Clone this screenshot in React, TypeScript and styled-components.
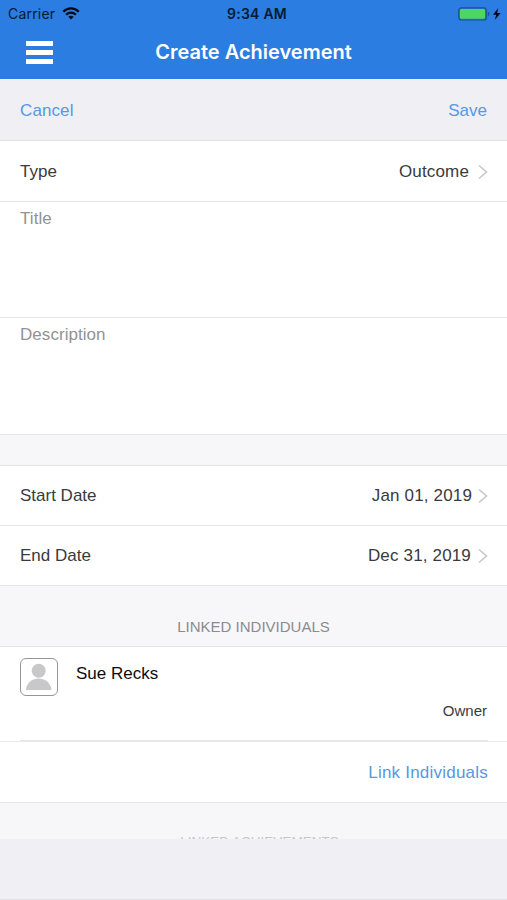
import React from "react";
import styled, { createGlobalStyle } from "styled-components";

const GlobalStyle = createGlobalStyle`
  *, *::before, *::after { box-sizing: border-box; }
  body { margin: 0; background: #efeff4; }
  button { border: 0; padding: 0; margin: 0; background: none; font: inherit; }
  svg { display: block; }
`;

const Screen = styled.div`
  width: 507px;
  height: 900px;
  display: flex;
  flex-direction: column;
  overflow: hidden;
  background: #ffffff;
  color: #3a3a3c;
  font: 17px/20px "Liberation Sans", Arial, sans-serif;
  white-space: nowrap;
`;

const Header = styled.header`
  flex: none;
  height: 79px;
  background: #2b7de1;
  font-family: Inter, sans-serif;
`;

const StatusBar = styled.div`
  height: 27px;
  display: grid;
  grid-template-columns: 1fr auto 1fr;
  align-items: center;
  padding: 0 6px 0 8px;
  color: #071a33;
  font-size: 14px;
`;

const Carrier = styled.div`
  display: flex;
  align-items: center;
  gap: 7px;
  letter-spacing: 0.2px;
`;

const Clock = styled.div`
  font-weight: 600;
  font-size: 14px;
  letter-spacing: 0.25px;
  padding-left: 5px;
`;

const Power = styled.div`
  display: flex;
  justify-content: flex-end;
`;

const NavBar = styled.div`
  height: 50px;
  display: grid;
  grid-template-columns: 1fr auto 1fr;
  align-items: center;
  padding: 0 26px;
`;

const MenuButton = styled.button`
  width: 27px;
  height: 23px;
  display: flex;
  flex-direction: column;
  justify-content: space-between;
`;

const MenuBar = styled.span`
  width: 27px;
  height: 5px;
  background: #ffffff;
`;

const NavTitle = styled.h1`
  margin: 0;
  color: #ffffff;
  font-size: 20px;
  line-height: 24px;
  font-weight: 600;
  letter-spacing: 0;
`;

const Actions = styled.div`
  flex: none;
  height: 62px;
  display: flex;
  align-items: center;
  justify-content: space-between;
  padding: 2px 20px 0 20px;
  background: #efeff4;
  border-bottom: 1px solid #e0e0e3;
`;

const LinkButton = styled.button<{ $spacing?: number }>`
  color: #5599e2;
  letter-spacing: ${(p) => p.$spacing ?? 0}px;
`;

const Row = styled.div<{ $height: number }>`
  flex: none;
  height: ${(p) => p.$height}px;
  display: flex;
  align-items: center;
  justify-content: space-between;
  padding: 1px 19px 0 20px;
  border-bottom: 1px solid #e5e5e8;
`;

const RowValue = styled.div<{ $gap: number }>`
  display: flex;
  align-items: center;
  gap: ${(p) => p.$gap}px;
  letter-spacing: 0.16px;
`;

const TextArea = styled.div<{ $height: number }>`
  flex: none;
  height: ${(p) => p.$height}px;
  padding: 7px 20px;
  color: #929294;
  letter-spacing: 0.05px;
  border-bottom: 1px solid #e5e5e8;
`;

const Band = styled.div<{ $height: number; $pad?: number }>`
  flex: none;
  height: ${(p) => p.$height}px;
  padding-top: ${(p) => p.$pad ?? 0}px;
  overflow: hidden;
  background: #f7f7fa;
  border-bottom: 1px solid #e4e4e8;
  color: #8b8b8e;
  font-size: 15px;
  line-height: 18px;
  text-align: center;
`;

const NextBand = styled(Band)`
  border-bottom: 0;
  padding-left: 12px;
  color: #c6c6c9;
  font-size: 13.5px;
`;

const Person = styled.div`
  flex: none;
  height: 95px;
  display: grid;
  grid-template-columns: 38px 1fr auto;
  column-gap: 18px;
  padding: 0 20px 0 20px;
  background: linear-gradient(#e5e5e7, #e5e5e7) 20px 93px / 468px 1px no-repeat;
  border-bottom: 1px solid #e9e9eb;
`;

const Avatar = styled.div`
  width: 38px;
  height: 38px;
  margin-top: 11px;
  border: 1.5px solid #969698;
  border-radius: 6px;
  overflow: hidden;
`;

const PersonName = styled.div`
  padding-top: 17px;
  color: #0c0c0d;
`;

const Role = styled.div`
  padding-top: 54px;
  font-size: 15px;
`;

const LinkRow = styled.div`
  flex: none;
  height: 61px;
  display: flex;
  align-items: center;
  justify-content: flex-end;
  padding: 1px 19px 0 0;
  border-bottom: 1px solid #e5e5e8;
`;

const BottomBar = styled.div`
  flex: none;
  height: 61px;
  background: #efeff4;
  border-bottom: 1px solid #e2e2e6;
`;

const Chevron = () => (
  <svg width="10" height="16" viewBox="0 0 10 16" fill="none" stroke="#c7c7ca" strokeWidth="1.6">
    <path d="M1 1.5 8.5 8 1 14.5" />
  </svg>
);

const Wifi = () => (
  <svg width="18" height="13" viewBox="0 0 18 13" fill="none" stroke="#050b18" strokeWidth="2.3">
    <path d="M1.3 4.8C5.6.3 12.4.3 16.7 4.8" />
    <path d="M4.1 7.7C6.9 4.9 11.1 4.9 13.9 7.7" />
    <path d="M6.3 9.8C7.9 8.3 10.1 8.3 11.7 9.8L9 12.6Z" fill="#050b18" stroke="none" />
  </svg>
);

const Battery = () => (
  <svg width="43" height="14" viewBox="0 0 43 14">
    <rect x=".8" y=".8" width="27.4" height="12.2" rx="2.6" fill="none" stroke="#1c4f93" strokeWidth="1.2" />
    <rect x="2" y="2" width="25" height="9.8" rx="1.3" fill="#4bd763" />
    <path d="M29.8 4.8q1.7.5 1.7 2.1t-1.7 2.1Z" fill="#1c4f93" />
    <path d="M40.2 1 35 7.8h3.2L36.8 13l5.8-7.1h-3.5Z" fill="#050b18" />
  </svg>
);

const dates = [
  { label: "Start Date", value: "Jan 01, 2019", height: 60, gap: 6 },
  { label: "End Date", value: "Dec 31, 2019", height: 60, gap: 7 },
];

export default function App() {
  return (
    <>
      <GlobalStyle />
      <Screen>
        <Header>
          <StatusBar>
            <Carrier>Carrier <Wifi /></Carrier>
            <Clock>9:34 AM</Clock>
            <Power><Battery /></Power>
          </StatusBar>
          <NavBar>
            <MenuButton aria-label="Menu"><MenuBar /><MenuBar /><MenuBar /></MenuButton>
            <NavTitle>Create Achievement</NavTitle>
          </NavBar>
        </Header>
        <Actions>
          <LinkButton $spacing={0.1}>Cancel</LinkButton>
          <LinkButton>Save</LinkButton>
        </Actions>
        <Row $height={61}>
          <span>Type</span>
          <RowValue $gap={9}>Outcome<Chevron /></RowValue>
        </Row>
        <TextArea $height={116}>Title</TextArea>
        <TextArea $height={117}>Description</TextArea>
        <Band $height={31} />
        {dates.map((d) => (
          <Row key={d.label} $height={d.height}>
            <span>{d.label}</span>
            <RowValue $gap={d.gap}>{d.value}<Chevron /></RowValue>
          </Row>
        ))}
        <Band $height={61} $pad={32}>LINKED INDIVIDUALS</Band>
        <Person>
          <Avatar>
            <svg width="35" height="35" viewBox="0 0 35 35" fill="#c8c8ca">
              <circle cx="17.7" cy="11.7" r="7" />
              <path d="M4.8 31C6.6 15.8 28.6 15.8 30.6 31Z" />
            </svg>
          </Avatar>
          <PersonName>Sue Recks</PersonName>
          <Role>Owner</Role>
        </Person>
        <LinkRow><LinkButton $spacing={0.22}>Link Individuals</LinkButton></LinkRow>
        <NextBand $height={36} $pad={30}>LINKED ACHIEVEMENTS</NextBand>
        <BottomBar />
      </Screen>
    </>
  );
}
